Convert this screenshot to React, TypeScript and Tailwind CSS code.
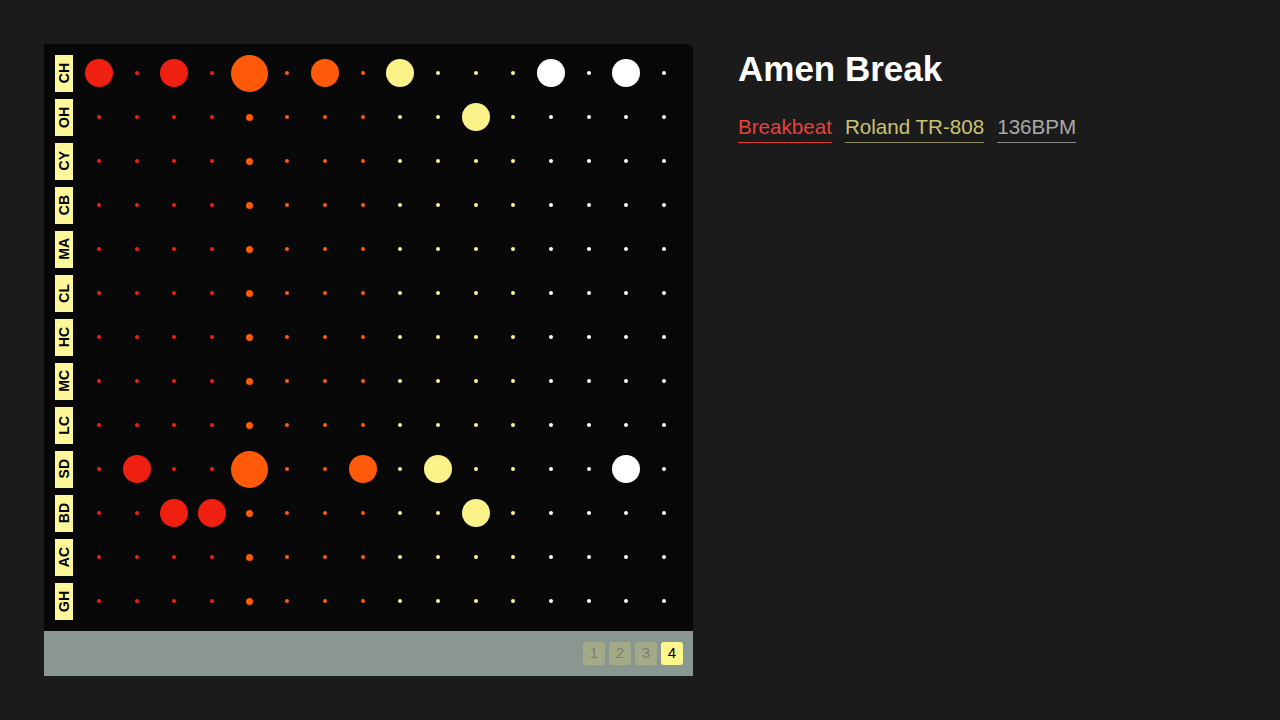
const ROWS = ["CH", "OH", "CY", "CB", "MA", "CL", "HC", "MC", "LC", "SD", "BD", "AC", "GH"];

// hits per instrument, by step index
const PATTERN: Record<string, number[]> = {
  CH: [0, 2, 4, 6, 8, 12, 14],
  OH: [10],
  SD: [1, 4, 7, 9, 14],
  BD: [2, 3, 10],
};

const STEPS = Array.from({ length: 16 }, (_, i) => i);
const CURRENT_STEP = 4;

function stepColor(step: number) {
  if (step < 4) return "bg-[#ef200f]";
  if (step < 8) return "bg-[#ff5a0a]";
  if (step < 12) return "bg-[#fbf38a]";
  return "bg-white";
}

function Cell({ step, hit }: { step: number; hit: boolean }) {
  const current = step === CURRENT_STEP;
  let size = "w-[4px] h-[4px]";
  if (hit) size = current ? "w-[37px] h-[37px]" : "w-[28px] h-[28px]";
  else if (current) size = "w-[7px] h-[7px]";
  return (
    <div className="flex items-center justify-center">
      <div className={`rounded-full ${size} ${stepColor(step)}`} />
    </div>
  );
}

function Row({ name }: { name: string }) {
  const hits = PATTERN[name] ?? [];
  return (
    <div className="flex h-[44px] items-center">
      <div className="ml-[11px] flex h-[37px] w-[18px] items-center justify-center bg-[#fdf79a]">
        <span className="rotate-180 text-[14px] font-bold leading-none text-black [writing-mode:vertical-rl]">
          {name}
        </span>
      </div>
      <div className="ml-[7px] mr-[10px] grid flex-1 grid-cols-16">
        {STEPS.map((s) => (
          <Cell key={s} step={s} hit={hits.includes(s)} />
        ))}
      </div>
    </div>
  );
}

function PageButton({ n, active }: { n: number; active?: boolean }) {
  return (
    <div
      className={`flex h-[23px] w-[22px] items-center justify-center rounded-[3px] text-[15px] ${
        active ? "bg-[#fdf88e] text-black" : "bg-[#a3aa87] text-[#7b8270]"
      }`}
    >
      {n}
    </div>
  );
}

export default function App() {
  return (
    <div
      className="flex min-h-[720px] w-full bg-[#1b1b1b] pl-[44px] pt-[44px]"
      style={{ fontFamily: '"Liberation Sans", Arial, sans-serif' }}
    >
      <div className="w-[649px] overflow-hidden rounded-tr-md rounded-b-md">
        <div className="bg-[#080808] pt-[7px] pb-[8px]">
          {ROWS.map((r) => (
            <Row key={r} name={r} />
          ))}
        </div>
        <div className="flex h-[45px] items-center justify-end gap-[4px] bg-[#8a9690] pr-[10px]">
          <PageButton n={1} />
          <PageButton n={2} />
          <PageButton n={3} />
          <PageButton n={4} active />
        </div>
      </div>
      <div className="ml-[45px]">
        <h1 className="mt-[7px] text-[35px] font-bold leading-none text-white">Amen Break</h1>
        <div className="mt-[31px] flex gap-[13px] text-[20.6px] leading-none">
          <span className="border-b border-[#e03a33] pb-[4px] text-[#e8413a]">Breakbeat</span>
          <span className="border-b border-[#8c8a5a] pb-[4px] text-[#c9c272]">Roland TR-808</span>
          <span className="border-b border-[#8a8a8a] pb-[4px] text-[#aaaaaa]">136BPM</span>
        </div>
      </div>
    </div>
  );
}
